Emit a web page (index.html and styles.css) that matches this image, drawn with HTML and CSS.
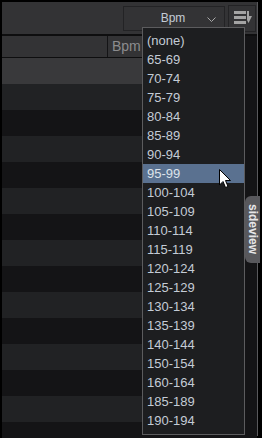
FILE: index.html
```html
<!DOCTYPE html>
<html lang="en">

<head>
    <meta charset="UTF-8">
    <meta name="viewport" content="width=device-width, initial-scale=1.0">
    <title>Bpm filter</title>
    <link rel="stylesheet" href="styles.css">
</head>

<body>
    <div class="app">
        <div class="toolbar">
            <div class="select">
                <span class="select-label">Bpm</span>
                <svg class="chevron" width="9" height="5" viewBox="0 0 9 5">
                    <polyline points="0.5,0.5 4.5,4.5 8.5,0.5" fill="none" stroke="#a8a8a8" stroke-width="1"/>
                </svg>
            </div>
            <button class="icon-btn">
                <svg width="20" height="14" viewBox="0 0 20 14">
                    <rect x="0" y="0" width="12" height="3" fill="#a4a4a4"/>
                    <rect x="0" y="5" width="12" height="3" fill="#a4a4a4"/>
                    <rect x="0" y="10" width="12" height="3" fill="#a4a4a4"/>
                    <polygon points="13,0 15,0 15,5 18,5 14.5,12 13,9" fill="#a4a4a4"/>
                </svg>
            </button>
        </div>

        <div class="main">
            <div class="table">
                <div class="header">
                    <div class="col-blank"></div>
                    <div class="col-bpm">Bpm</div>
                </div>
                <div class="row current"></div>
                <div class="row"></div>
                <div class="row"></div>
                <div class="row"></div>
                <div class="row"></div>
                <div class="row"></div>
                <div class="row"></div>
                <div class="row"></div>
                <div class="row"></div>
                <div class="row"></div>
                <div class="row"></div>
                <div class="row"></div>
                <div class="row"></div>
                <div class="row"></div>
                <div class="row"></div>
            </div>
            <div class="rail"></div>
        </div>

        <ul class="menu">
            <li>(none)</li>
            <li>65-69</li>
            <li>70-74</li>
            <li>75-79</li>
            <li>80-84</li>
            <li>85-89</li>
            <li>90-94</li>
            <li class="hover">95-99</li>
            <li>100-104</li>
            <li>105-109</li>
            <li>110-114</li>
            <li>115-119</li>
            <li>120-124</li>
            <li>125-129</li>
            <li>130-134</li>
            <li>135-139</li>
            <li>140-144</li>
            <li>150-154</li>
            <li>160-164</li>
            <li>185-189</li>
            <li>190-194</li>
        </ul>

        <div class="sideview">sideview</div>

        <svg class="cursor" width="13" height="20" viewBox="0 0 13 20">
            <polygon points="0.5,0.5 0.5,16 4,12.5 6.5,18.5 9,17.5 6.5,11.5 11.5,11.5" fill="#ffffff" stroke="#000000" stroke-width="1"/>
        </svg>
    </div>
</body>

</html>
```

FILE: styles.css
```css
html,
body {
    margin: 0;
    padding: 0;
    background-color: #000000;
}

body {
    width: 262px;
    height: 438px;
    overflow: hidden;
    font-family: "Liberation Sans", Arial, sans-serif;
}

.app {
    position: relative;
    width: 256px;
    height: 434px;
    margin: 2px 0 0 2px;
    border-right: 1px solid #59595c;
    box-sizing: border-box;
    display: flex;
    flex-direction: column;
    background-color: #141416;
}

.toolbar {
    height: 32px;
    flex-shrink: 0;
    display: flex;
    justify-content: flex-end;
    align-items: center;
    gap: 3px;
    padding-right: 1px;
    background-color: #333335;
    border-bottom: 2px solid #0e0e0f;
}

.select {
    position: relative;
    width: 102px;
    height: 25px;
    box-sizing: border-box;
    border: 1px solid #232325;
    display: flex;
    align-items: center;
    justify-content: center;
}

.select-label {
    font-size: 12px;
    color: #c4ccd6;
    margin-left: -2px;
}

.chevron {
    position: absolute;
    right: 8px;
    top: 10px;
}

.icon-btn {
    width: 28px;
    height: 27px;
    padding: 0 0 0 5px;
    margin: 0;
    border: 1px solid #232325;
    background-color: #333335;
    display: flex;
    align-items: center;
}

.main {
    flex: 1;
    display: flex;
}

.table {
    width: 242px;
    display: flex;
    flex-direction: column;
}

.header {
    height: 21px;
    display: flex;
    background-color: #333335;
    border-bottom: 1px solid #0e0e0f;
}

.col-blank {
    width: 105px;
    border-right: 1px solid #141416;
}

.col-bpm {
    padding-left: 4px;
    font-size: 14px;
    line-height: 21px;
    color: #8c8c8e;
}

.row {
    height: 26px;
    flex-shrink: 0;
    background-color: #141416;
}

.row:nth-child(odd) {
    background-color: #212224;
}

.row.current {
    background-color: #39393b;
}

.rail {
    flex: 1;
    background-color: #141416;
}

.menu {
    position: absolute;
    left: 140px;
    top: 25px;
    width: 103px;
    margin: 0;
    padding: 3px 0 4px 0;
    list-style: none;
    box-sizing: border-box;
    background-color: #1d1e20;
    border: 1px solid #5c5c5e;
}

.menu li {
    height: 19px;
    line-height: 19px;
    padding-left: 4px;
    font-size: 13px;
    color: #c4ccd6;
}

.menu li.hover {
    background-color: #5a7190;
    color: #dde3ea;
}

.sideview {
    position: absolute;
    left: 243px;
    top: 194px;
    width: 15px;
    height: 67px;
    box-sizing: border-box;
    border-radius: 6px 0 0 6px;
    background-color: #58585c;
    writing-mode: vertical-rl;
    text-align: center;
    line-height: 15px;
    font-size: 12px;
    font-weight: bold;
    color: #e6e6e8;
}

.cursor {
    position: absolute;
    left: 217px;
    top: 167px;
}
```
